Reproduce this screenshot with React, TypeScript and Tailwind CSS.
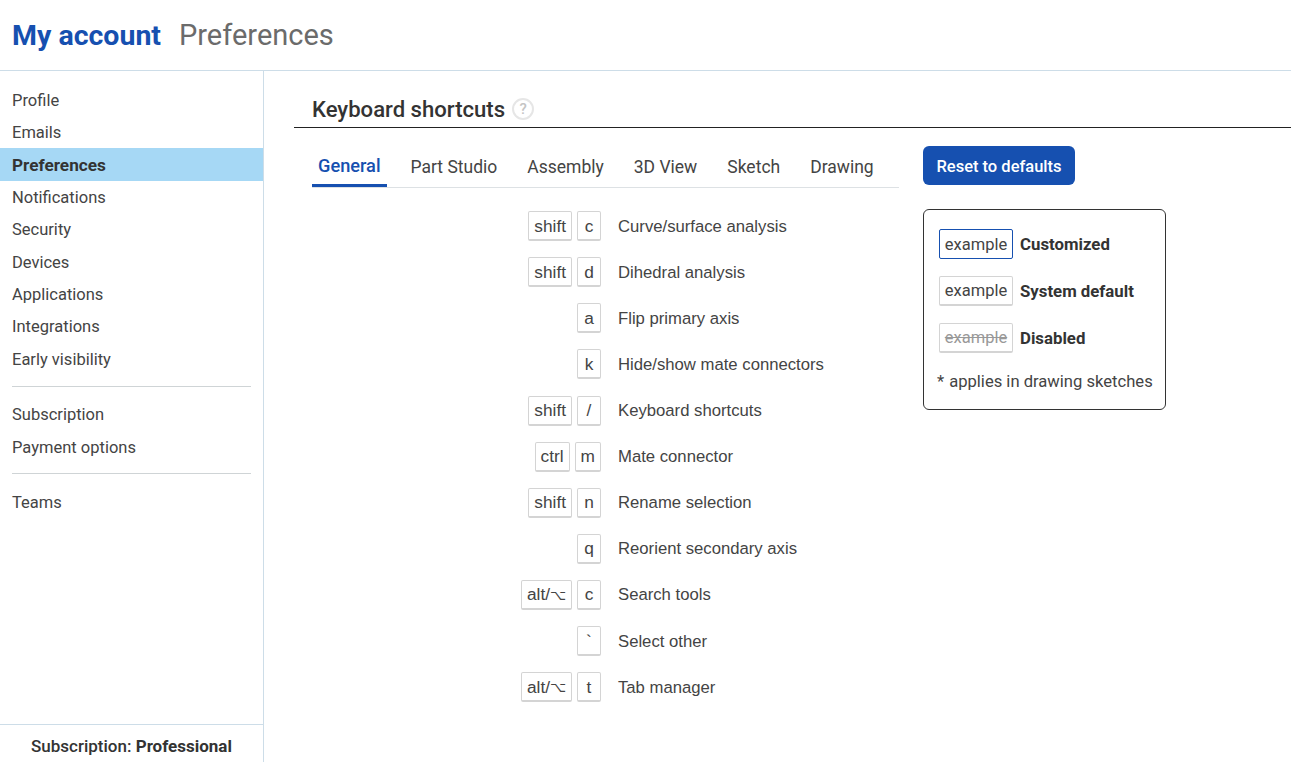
import React from "react";

const din = "font-['Roboto',sans-serif]";

const navGroups = [
  ["Profile", "Emails", "Preferences", "Notifications", "Security", "Devices", "Applications", "Integrations", "Early visibility"],
  ["Subscription", "Payment options"],
  ["Teams"],
];

const tabs = ["General", "Part Studio", "Assembly", "3D View", "Sketch", "Drawing"];

const alt = (
  <>
    alt/<span className="text-[14px]">⌥</span>
  </>
);

const shortcuts: { mod?: React.ReactNode; k: string; label: string }[] = [
  { mod: "shift", k: "c", label: "Curve/surface analysis" },
  { mod: "shift", k: "d", label: "Dihedral analysis" },
  { k: "a", label: "Flip primary axis" },
  { k: "k", label: "Hide/show mate connectors" },
  { mod: "shift", k: "/", label: "Keyboard shortcuts" },
  { mod: "ctrl", k: "m", label: "Mate connector" },
  { mod: "shift", k: "n", label: "Rename selection" },
  { k: "q", label: "Reorient secondary axis" },
  { mod: alt, k: "c", label: "Search tools" },
  { k: "`", label: "Select other" },
  { mod: alt, k: "t", label: "Tab manager" },
];

function Key({ children }: { children: React.ReactNode }) {
  return (
    <span className="flex h-[30px] min-w-[24px] items-center justify-center rounded-[2px] border border-b-2 border-[#d4d4d4] px-[5px] pt-[2px] text-[17.3px] text-[#444]">
      {children}
    </span>
  );
}

function Sidebar() {
  return (
    <aside className={`flex w-[264px] shrink-0 flex-col border-r border-[#cddde8] ${din}`}>
      <nav className="flex-1 pt-[12.6px]">
        {navGroups.map((group, i) => (
          <div key={i}>
            {i > 0 && <div className="mx-3 mt-[10.4px] mb-[11.6px] h-px bg-[#cfd4d6]" />}
            {group.map((item) => (
              <div
                key={item}
                className={`flex h-[32.4px] items-center px-3 pt-[2.6px] ${
                  item === "Preferences" ? "bg-[#a6d8f5] text-[17.2px] font-bold text-[#333]" : "text-[16.5px] text-[#444]"
                }`}
              >
                {item}
              </div>
            ))}
          </div>
        ))}
      </nav>
      <div className="flex h-[38px] items-center justify-center border-t border-[#cddde8] pt-[6px] text-[17px] font-medium text-[#333]">
        Subscription:&nbsp;<span className="font-bold">Professional</span>
      </div>
    </aside>
  );
}

function Legend() {
  const rows = [
    { name: "Customized", box: "border border-[#1650b0] text-[#444]" },
    { name: "System default", box: "border border-b-2 border-[#d4d4d4] text-[#444]" },
    { name: "Disabled", box: "border border-b-2 border-[#d4d4d4] text-[#999] line-through" },
  ];
  return (
    <div className={`mt-6 h-[201px] w-[243px] rounded-[6px] border border-[#333] px-[15px] pt-[19px] ${din}`}>
      <div className="flex flex-col gap-[17px]">
        {rows.map((r) => (
          <div key={r.name} className="flex items-center gap-[7px]">
            <span className={`flex h-[30px] w-[74px] items-center justify-center rounded-[2px] pt-[2px] text-[16.5px] ${r.box}`}>
              example
            </span>
            <span className="pt-[2px] text-[16.8px] font-bold text-[#333]">{r.name}</span>
          </div>
        ))}
      </div>
      <div className="mt-[17px] -ml-[2px] flex gap-[5px] whitespace-nowrap text-[16.6px] text-[#444]">
        <span>*</span>
        <span>applies in drawing sketches</span>
      </div>
    </div>
  );
}

export default function App(): React.ReactElement {
  return (
    <div className="flex h-[762px] flex-col overflow-hidden bg-white">
      <header className={`flex h-[71px] shrink-0 items-center gap-[18px] border-b border-[#cddde8] px-3 pt-[2px] ${din}`}>
        <span className="text-[28.5px] font-bold text-[#1650b0]">My account</span>
        <span className="text-[29px] text-[#6b6b6b]">Preferences</span>
      </header>
      <div className="flex min-h-0 flex-1">
        <Sidebar />
        <main className="flex-1 pl-[30px]">
          <div className={`flex h-[57px] items-end gap-[7px] border-b border-[#222] pb-[3px] pl-[18px] ${din}`}>
            <h2 className="text-[22.1px] font-medium leading-[30px] text-[#333]">Keyboard shortcuts</h2>
            <span className="mb-[4px] flex h-[22px] w-[22px] items-center justify-center rounded-full border-2 border-[#e6e6e6] text-[15px] font-medium text-[#c4c4c4]">
              ?
            </span>
          </div>
          <div className="flex pl-[18px]">
            <div className="w-[587px]">
              <div className={`mt-[20px] flex h-[40px] border-b border-[#dde1e4] ${din}`}>
                {tabs.map((t, i) => (
                  <div
                    key={t}
                    className={`mr-[18px] flex h-[39px] items-center whitespace-nowrap px-[6px] ${
                      i === 0 ? "border-b-[3px] border-[#1650b0] text-[18.2px] font-medium text-[#1650b0]" : "text-[17.5px] text-[#444]"
                    }`}
                  >
                    {t}
                  </div>
                ))}
              </div>
              <div className="mt-[23.2px] flex flex-col gap-[16.1px] font-['Liberation_Sans',sans-serif]">
                {shortcuts.map((s) => (
                  <div key={s.label} className="flex h-[30px] items-center">
                    <div className="flex w-[289px] justify-end gap-[5px]">
                      {s.mod && <Key>{s.mod}</Key>}
                      <Key>{s.k}</Key>
                    </div>
                    <span className="ml-[17px] text-[16.7px] text-[#444]">{s.label}</span>
                  </div>
                ))}
              </div>
            </div>
            <div className="ml-6">
              <button className={`mt-[18px] h-[39px] w-[152px] rounded-[6px] bg-[#1650b0] pt-[3px] text-[16.5px] font-medium text-white ${din}`}>
                Reset to defaults
              </button>
              <Legend />
            </div>
          </div>
        </main>
      </div>
    </div>
  );
}
